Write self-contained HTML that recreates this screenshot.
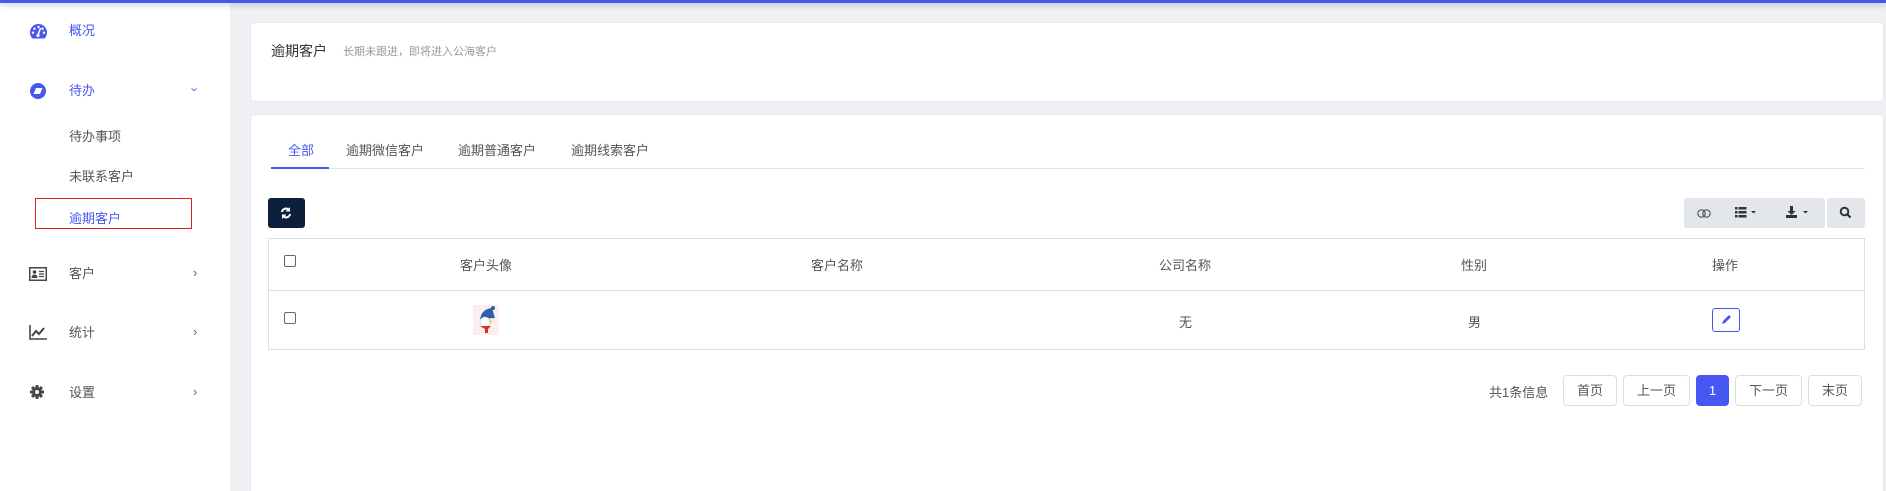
<!DOCTYPE html>
<html><head><meta charset="utf-8"><style>
*{box-sizing:border-box;margin:0;padding:0}
html,body{width:1886px;height:491px;overflow:hidden}
body{background:#eef0f4;font-family:"Liberation Sans","Noto Sans CJK SC",sans-serif;font-size:13px;color:#555;position:relative}
.a{position:absolute}
.top{left:0;top:0;width:1886px;height:3px;background:#4658f0;box-shadow:0 2px 6px rgba(0,0,0,.25);z-index:5}
.side{left:0;top:0;width:230px;height:491px;background:#fff}
.st{position:absolute;left:69px;font-size:13px;color:#555;line-height:16px}
.chev{position:absolute;left:193px;font-size:13px;color:#666}
.card{background:#fff;border:1px solid #e4e6ea;border-radius:4px}
.btn{position:absolute;top:375px;height:31px;border:1px solid #ddd;border-radius:4px;background:#fff;text-align:center;line-height:29px;color:#555;font-size:13px}
.th{position:absolute;top:255px;font-size:13px;color:#555;transform:translateX(-50%)}
.cb{position:absolute;left:284px;width:12px;height:12px;border:1px solid #666;border-radius:2px;background:#fff}
</style></head><body>
<div class="a top"></div>
<div class="a side">
 <svg class="a" style="left:30px;top:24px" width="17" height="15" viewBox="0 0 17 15"><path d="M8.5 0A8.5 8.5 0 0 0 0 8.5c0 2.5 1 4.5 2.3 6h12.4C16 13 17 11 17 8.5A8.5 8.5 0 0 0 8.5 0z" fill="#4658f0"/><circle cx="8.5" cy="3" r="1.2" fill="#fff"/><circle cx="4.5" cy="4.7" r="1.2" fill="#fff"/><circle cx="12.5" cy="4.7" r="1.2" fill="#fff"/><circle cx="3" cy="8.7" r="1.2" fill="#fff"/><circle cx="14" cy="8.7" r="1.2" fill="#fff"/><path d="M10.5 4L8 11" stroke="#fff" stroke-width="1.5"/><circle cx="8" cy="11.5" r="1.6" fill="#fff"/></svg>
 <div class="st" style="top:23px;color:#4658f0">概况</div>
 <svg class="a" style="left:30px;top:83px" width="16" height="16" viewBox="0 0 16 16"><circle cx="8" cy="8" r="8" fill="#4658f0"/><path d="M6 5h6.5l-2.5 6H3.5z" fill="#fff"/></svg>
 <div class="st" style="top:83px;color:#4658f0">待办</div>
 <div class="chev" style="top:82px;color:#4658f0;transform:rotate(90deg)">›</div>
 <div class="st" style="top:129px">待办事项</div>
 <div class="st" style="top:169px">未联系客户</div>
 <div class="a" style="left:35px;top:198px;width:157px;height:31px;border:1.5px solid #e02020"></div>
 <div class="st" style="top:211px;color:#4658f0">逾期客户</div>
 <svg class="a" style="left:29px;top:267px" width="18" height="14" viewBox="0 0 18 14"><rect x=".75" y=".75" width="16.5" height="12.5" fill="none" stroke="#444" stroke-width="1.5"/><circle cx="5.5" cy="5" r="1.8" fill="#444"/><path d="M2.5 11c0-2.5 1.5-3.5 3-3.5s3 1 3 3.5z" fill="#444"/><path d="M10 4.5h5M10 7h5M10 9.5h5" stroke="#444" stroke-width="1.2"/></svg>
 <div class="st" style="top:266px">客户</div><div class="chev" style="top:265px">›</div>
 <svg class="a" style="left:29px;top:325px" width="18" height="15" viewBox="0 0 18 15"><path d="M1 0v14h17" fill="none" stroke="#444" stroke-width="1.6"/><path d="M3 11l4-5 3 3 5-6" fill="none" stroke="#444" stroke-width="2"/></svg>
 <div class="st" style="top:325px">统计</div><div class="chev" style="top:324px">›</div>
 <svg class="a" style="left:30px;top:385px" width="14" height="14" viewBox="0 0 14 14"><g fill="#444"><circle cx="7" cy="7" r="5"/><rect x="5.5" y="0" width="3" height="14"/><rect x="0" y="5.5" width="14" height="3"/><rect x="5.5" y="0" width="3" height="14" transform="rotate(45 7 7)"/><rect x="5.5" y="0" width="3" height="14" transform="rotate(-45 7 7)"/></g><circle cx="7" cy="7" r="2" fill="#fff"/></svg>
 <div class="st" style="top:385px">设置</div><div class="chev" style="top:384px">›</div>
</div>
<div class="a card" style="left:250px;top:22px;width:1634px;height:80px"></div>
<div class="a" style="left:271px;top:41px;font-size:14px;color:#333">逾期客户</div>
<div class="a" style="left:343px;top:43px;font-size:11px;color:#999">长期未跟进，即将进入公海客户</div>
<div class="a card" style="left:250px;top:114px;width:1634px;height:380px"></div>
<div class="a" style="left:271px;top:168px;width:1594px;height:1px;background:#e0e2e6"></div>
<div class="a" style="left:271px;top:167px;width:58px;height:2px;background:#4658f0"></div>
<div class="a" style="left:288px;top:140px;color:#4658f0">全部</div>
<div class="a" style="left:346px;top:140px">逾期微信客户</div>
<div class="a" style="left:458px;top:140px">逾期普通客户</div>
<div class="a" style="left:571px;top:140px">逾期线索客户</div>
<div class="a" style="left:268px;top:198px;width:37px;height:30px;background:#0d1f3c;border-radius:3px"></div>
<svg class="a" style="left:280px;top:207px" width="12" height="12" viewBox="0 0 12 12"><path d="M2 5a4 4 0 0 1 7-2" fill="none" stroke="#fff" stroke-width="2"/><path d="M10 0v4.5H5.5z" fill="#fff"/><path d="M10 7a4 4 0 0 1-7 2" fill="none" stroke="#fff" stroke-width="2"/><path d="M2 12V7.5h4.5z" fill="#fff"/></svg>
<div class="a" style="left:1684px;top:198px;width:141px;height:30px;background:#e3e6ea;border-radius:3px"></div>
<div class="a" style="left:1827px;top:198px;width:38px;height:30px;background:#e3e6ea;border-radius:3px"></div>
<svg class="a" style="left:1697px;top:209px" width="14" height="9"><circle cx="4.5" cy="4.5" r="3.7" fill="none" stroke="#555" stroke-width="1.2"/><circle cx="9.5" cy="4.5" r="3.7" fill="none" stroke="#555" stroke-width="1.2"/></svg>
<svg class="a" style="left:1735px;top:207px" width="26" height="11"><g fill="#333"><rect x="0" y="0" width="2.5" height="2.5"/><rect x="0" y="4" width="2.5" height="2.5"/><rect x="0" y="8" width="2.5" height="2.5"/><rect x="3.5" y="0" width="8" height="2.5"/><rect x="3.5" y="4" width="8" height="2.5"/><rect x="3.5" y="8" width="8" height="2.5"/><path d="M16 4h5l-2.5 2.5z"/></g></svg>
<svg class="a" style="left:1786px;top:206px" width="27" height="12"><g fill="#333"><path d="M4 0h3v5h2.5L5.5 9 1.5 5H4z"/><rect x="0" y="9" width="11" height="3"/><path d="M17 5h5l-2.5 2.5z"/></g></svg>
<svg class="a" style="left:1839px;top:206px" width="13" height="13"><circle cx="5.5" cy="5.5" r="3.8" fill="none" stroke="#333" stroke-width="2"/><path d="M8.3 8.3L11.5 11.5" stroke="#333" stroke-width="2.2"/></svg>
<div class="a" style="left:268px;top:238px;width:1597px;height:112px;border:1px solid #dcdfe4"></div>
<div class="a" style="left:268px;top:290px;width:1597px;height:1px;background:#dcdfe4"></div>
<div class="cb" style="top:255px"></div>
<div class="cb" style="top:312px"></div>
<div class="th" style="left:486px">客户头像</div>
<div class="th" style="left:837px">客户名称</div>
<div class="th" style="left:1185px">公司名称</div>
<div class="th" style="left:1474px">性别</div>
<div class="th" style="left:1725px">操作</div>
<svg class="a" style="left:473px;top:305px" width="26" height="30" viewBox="0 0 26 30"><rect width="26" height="30" fill="#fbeeee"/><path d="M7 14Q9 4 19 3l3 10z" fill="#2f5fa8"/><circle cx="20" cy="3" r="2" fill="#2f5fa8"/><circle cx="12" cy="17" r="5" fill="#fff" stroke="#ccc" stroke-width=".6"/><path d="M16 14l3 2-1 3z" fill="#f5c43b"/><path d="M7 21h11l-3 3v4h-3v-4z" fill="#e02a2a"/></svg>
<div class="a" style="left:1179px;top:312px">无</div>
<div class="a" style="left:1468px;top:312px">男</div>
<div class="a" style="left:1712px;top:308px;width:28px;height:24px;border:1px solid #4658f0;border-radius:3px"></div>
<svg class="a" style="left:1720px;top:314px" width="12" height="12"><path d="M2 10l1-3 6-6 2 2-6 6z" fill="#4658f0"/></svg>
<div class="a" style="left:1489px;top:382px">共1条信息</div>
<div class="btn" style="left:1563px;width:54px">首页</div>
<div class="btn" style="left:1623px;width:67px">上一页</div>
<div class="btn" style="left:1696px;width:33px;background:#4658f0;border-color:#4658f0;color:#fff">1</div>
<div class="btn" style="left:1735px;width:67px">下一页</div>
<div class="btn" style="left:1808px;width:54px">末页</div>
</body></html>
